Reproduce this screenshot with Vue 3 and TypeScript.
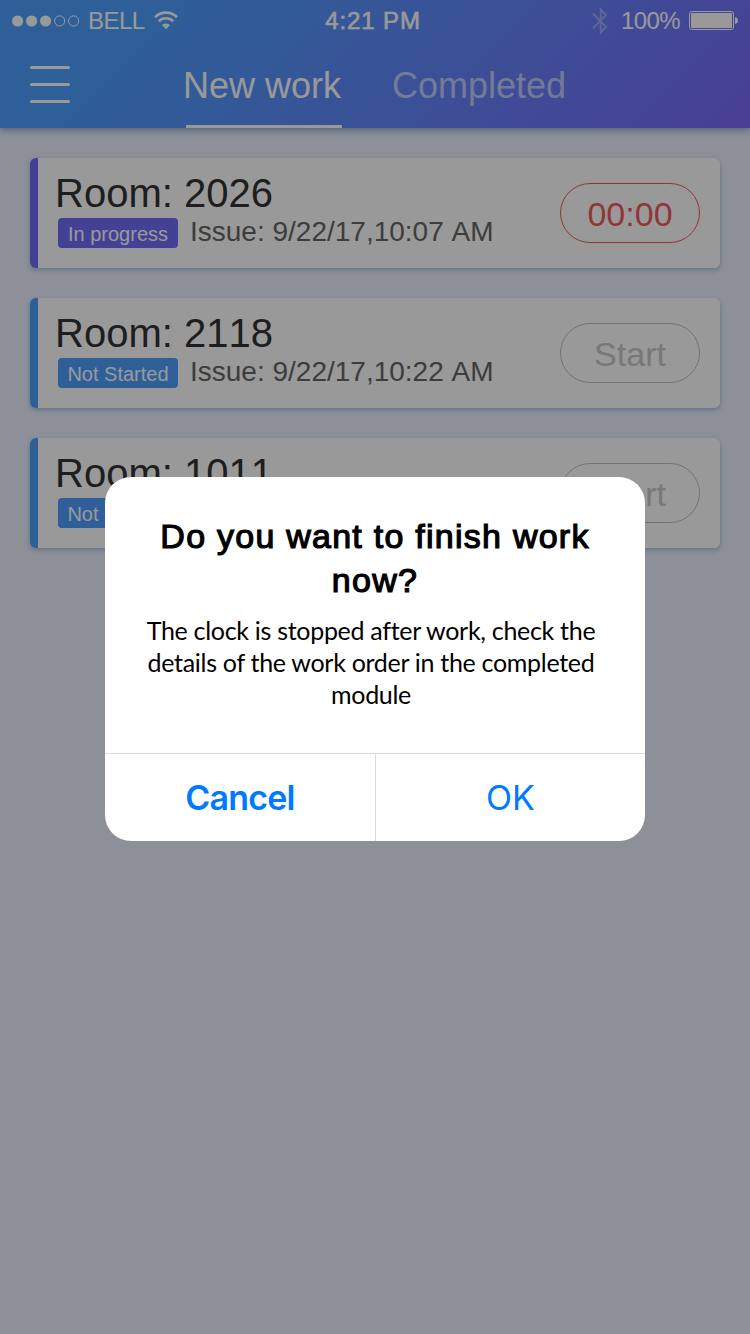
<script setup lang="ts">
interface Job {
  room: string
  issued: string
  status: string
  tone: 'active' | 'idle'
  action: string
}

const jobs: Job[] = [
  { room: '2026', issued: '9/22/17,10:07 AM', status: 'In progress', tone: 'active', action: '00:00' },
  { room: '2118', issued: '9/22/17,10:22 AM', status: 'Not Started', tone: 'idle', action: 'Start' },
  { room: '1011', issued: '9/22/17,10:22 AM', status: 'Not Started', tone: 'idle', action: 'Start' },
]
</script>

<template>
  <div class="screen">
    <header class="header">
      <div class="status">
        <div class="status-left">
          <svg class="dots" width="68" height="12" viewBox="0 0 68 12">
            <g fill="#fff">
              <circle cx="5.6" cy="6" r="5.6" />
              <circle cx="19.6" cy="6" r="5.6" />
              <circle cx="33.6" cy="6" r="5.6" />
            </g>
            <g fill="none" stroke="#fff">
              <circle cx="47.6" cy="6" r="5.1" />
              <circle cx="61.6" cy="6" r="5.1" />
            </g>
          </svg>
          <span class="carrier">BELL</span>
          <svg class="wifi" width="24" height="19" viewBox="0 0 24 19">
            <g fill="none" stroke="#fff" stroke-width="2.7">
              <path d="M1 6.2 A15.6 15.6 0 0 1 23 6.2" />
              <path d="M4.7 10.3 A10.3 10.3 0 0 1 19.3 10.3" />
            </g>
            <path d="M7.9 14.1 A5.8 5.8 0 0 1 16.1 14.1 L12 18.3 Z" fill="#fff" />
          </svg>
        </div>
        <span class="time">4:21 PM</span>
        <div class="status-right">
          <svg class="bluetooth" width="16" height="28" viewBox="0 0 16 28">
            <path d="M1 6.5 L14 20 L8.7 25.4 V2.6 L14 8 L1 21.5" fill="none" stroke="#fff" stroke-width="1.9" />
          </svg>
          <span class="percent">100%</span>
          <svg class="battery" width="49" height="19" viewBox="0 0 49 19">
            <rect x=".5" y=".5" width="44" height="18" rx="2.5" fill="none" stroke="#fff" />
            <rect x="2" y="2" width="41" height="15" rx="1" fill="#fff" />
            <path d="M46 6 Q49 6.5 49 9.5 Q49 12.5 46 13 Z" fill="#fff" />
          </svg>
        </div>
      </div>
      <nav class="nav">
        <button class="menu" aria-label="Menu"><i /><i /><i /></button>
        <span class="tab current">New work</span>
        <span class="tab">Completed</span>
      </nav>
    </header>

    <main class="list">
      <article v-for="job in jobs" :key="job.room" class="card" :class="job.tone">
        <div class="info">
          <h2>Room: {{ job.room }}</h2>
          <div class="meta">
            <span class="badge">{{ job.status }}</span>
            <span class="issued">Issue: {{ job.issued }}</span>
          </div>
        </div>
        <button class="action">{{ job.action }}</button>
      </article>
    </main>

    <div class="overlay">
      <section class="dialog" role="alertdialog">
        <h1>Do you want to finish work<br />now?</h1>
        <p>The clock is stopped after work, check the<br />details of the work order in the completed<br />module</p>
        <div class="buttons">
          <button class="cancel">Cancel</button>
          <button class="ok">OK</button>
        </div>
      </section>
    </div>
  </div>
</template>

<style>
body {
  margin: 0;
}
</style>

<style scoped>
* {
  box-sizing: border-box;
}
.screen {
  position: relative;
  width: 750px;
  height: 1334px;
  overflow: hidden;
  background: #ebf0ff;
  font-family: "Liberation Sans", Arial, sans-serif;
  font-kerning: none;
}
button {
  margin: 0;
  padding: 0;
  border: 0;
  background: none;
  font-family: inherit;
}
svg {
  display: block;
}
.header {
  height: 128px;
  color: #fff;
  background: linear-gradient(135deg, #4d9fff 0%, #4d9fff 20%, #7a6af8 100%);
  box-shadow: 0 2px 7px rgba(30, 80, 120, 0.5);
}
.status {
  display: grid;
  grid-template-columns: 1fr auto 1fr;
  align-items: center;
  height: 41px;
  padding: 0 12px;
  font-size: 24px;
  line-height: 41px;
}
.status-left,
.status-right {
  display: flex;
  align-items: center;
}
.status-right {
  justify-content: flex-end;
}
.carrier {
  margin-left: 8px;
  letter-spacing: -0.5px;
}
.wifi {
  margin-left: 9px;
}
.time {
  letter-spacing: 0.9px;
  -webkit-text-stroke: 0.6px #fff;
  margin-right: 4px;
}
.bluetooth {
  margin-right: 13px;
  opacity: 0.35;
}
.percent {
  letter-spacing: -0.6px;
  margin-right: 9px;
}
.nav {
  display: flex;
  height: 87px;
  padding-left: 30px;
}
.menu {
  display: flex;
  flex-direction: column;
  gap: 14px;
  width: 40px;
  margin: 25px 116px 0 0;
}
.menu i {
  height: 3px;
  border-radius: 2px;
  background: #fff;
}
.tab {
  height: 87px;
  margin-right: 50px;
  font-size: 36px;
  line-height: 89px;
  color: rgba(255, 255, 255, 0.6);
  width: 176px;
}
.tab.current {
  width: 156px;
  color: #fff;
  border-bottom: 3px solid #fff;
  text-indent: -3px;
  white-space: nowrap;
}
.list {
  display: flex;
  flex-direction: column;
  gap: 30px;
  padding: 30px;
}
.card {
  display: flex;
  justify-content: space-between;
  height: 110px;
  padding: 0 20px;
  border-radius: 6px;
  background: linear-gradient(to right, var(--tone) 8px, #fff 8px);
  box-shadow: 0 2px 5px rgba(60, 110, 160, 0.4);
}
.active {
  --tone: #716bf8;
}
.idle {
  --tone: #4d9fff;
}
.info h2 {
  margin: 12px 0 0 5px;
  font-size: 40px;
  font-weight: 400;
  line-height: 46px;
  color: #333;
}
.meta {
  display: flex;
  margin: 2px 0 0 8px;
  line-height: 30px;
}
.badge {
  width: 120px;
  height: 30px;
  border-radius: 4px;
  background: var(--tone);
  color: #fff;
  font-size: 20px;
  line-height: 32px;
  text-align: center;
}
.issued {
  margin: -1px 0 0 12px;
  font-size: 28px;
  color: #666;
}
.action {
  width: 140px;
  height: 60px;
  margin-top: 25px;
  padding-top: 3px;
  border: 1px solid #c0c0c0;
  border-radius: 30px;
  color: #c8c8c8;
  font-size: 34px;
}
.active .action {
  border-color: #f15b5b;
  color: #f15b5b;
}
.overlay {
  position: absolute;
  inset: 0;
  display: flex;
  justify-content: center;
  align-items: flex-start;
  padding-top: 477px;
  background: rgba(0, 0, 0, 0.4);
}
.dialog {
  display: flex;
  flex-direction: column;
  width: 540px;
  height: 364px;
  border-radius: 26px;
  background: #fff;
  color: #000;
  text-align: center;
  font-kerning: normal;
}
.dialog h1 {
  margin: 37px 0 0;
  font-size: 34px;
  font-weight: 400;
  line-height: 44px;
  letter-spacing: 1.25px;
  -webkit-text-stroke: 1.2px #000;
}
.dialog p {
  flex: 1;
  margin: 12px 0 0;
  padding-right: 8px;
  font-family: Lato, sans-serif;
  font-size: 25px;
  line-height: 32px;
  letter-spacing: -0.3px;
  white-space: nowrap;
}
.buttons {
  display: flex;
  height: 88px;
  border-top: 1px solid #dbdbdf;
}
.buttons button {
  flex: 1;
  color: #007aff;
  font-family: Inter, sans-serif;
  font-size: 34px;
}
.buttons .cancel {
  flex: 0 0 271px;
  border-right: 1px solid #dbdbdf;
  font-weight: 600;
  letter-spacing: -0.8px;
}
</style>
